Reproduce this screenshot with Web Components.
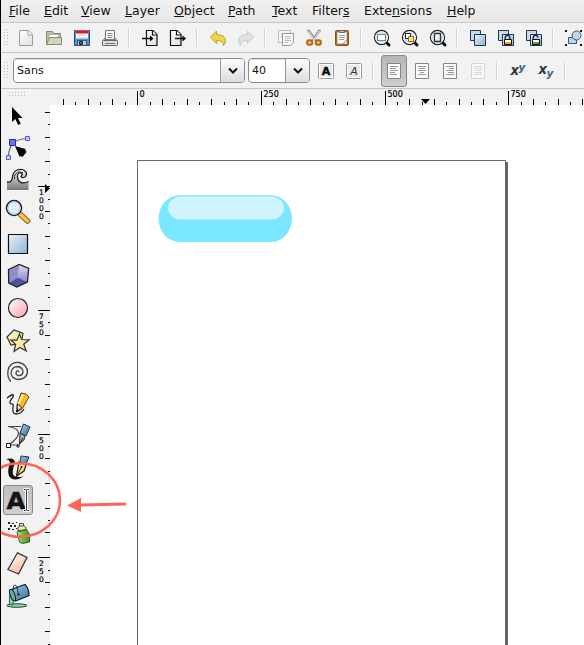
<!DOCTYPE html>
<html lang="en">
<head>
<meta charset="utf-8">
<title>Vector editor</title>
<style>
html,body{margin:0;width:584px;height:645px;overflow:hidden;background:#f2f2f2;font-family:"DejaVu Sans",sans-serif;color:#111}
</style>
</head>
<body>
<vector-app></vector-app>
<script>
const page = (x, y, w, h) => `<path d="M${x} ${y}h${w-4}l4 4v${h-4}h-${w}z" fill="url(#pg)"/>`;
const lens = inner => `<path d="M18.500 18.500l2.500 2.500" stroke="#111" stroke-width="3" stroke-linecap="round"/><circle cx="13.5" cy="13.5" r="7" fill="#d0e2f2" stroke="#222" stroke-width="1.3"/><circle cx="13.5" cy="13.5" r="5.9" fill="none" stroke="#eef6fc"/>${inner}`;
const dup = extra => `<g stroke="#20354f"><path d="M6.5 6.5h10v10h-10z" fill="#c7d9ea"/><path d="M10.500 10.500h11v11h-11z" fill="url(#bl)"/></g>${extra}`;
const lock = (c, open) => `<path d="M13.200 16v-2.500q0-2.200 2.300-2.200t2.300 2.200${open ? '' : 'v2.500'}" fill="none" stroke="#222" stroke-width="1.300"/><path d="M12.500 15.500h7v5h-7z" fill="#fff" stroke="#111"/><path d="M13 18h6v2h-6z" fill="${c}"/>`;
const boxed = c => `<rect x="6.500" y="6.500" width="15" height="15" rx="1" fill="#fff" stroke="#999"/><path d="M8 8h12v12h-12z" fill="#e9e9e9"/>${c}`;
const lines = (rows, faded) => `<path d="M7.500 6.500h13v15h-13z" fill="#fafafa" stroke="${faded ? '#d4d4d4' : '#858585'}"/><path d="${rows.map((r,i)=>`M${r[0]} ${9.500+i*2}h${r[1]}`).join('')}" stroke="${faded ? '#d4d4d4' : '#999'}"/>`;
const DEFS = `<defs><linearGradient id="pg" x2="1" y2="1"><stop stop-color="#fff"/><stop offset="1" stop-color="#ddd"/></linearGradient><linearGradient id="bl" x2="1" y2="1"><stop stop-color="#e9f3fb"/><stop offset="1" stop-color="#8fb2d0"/></linearGradient><linearGradient id="pk" x2="1" y2="1"><stop stop-color="#fff"/><stop offset="1" stop-color="#ff9eaa"/></linearGradient><linearGradient id="er" x2=".6" y2="1"><stop stop-color="#fff"/><stop offset="1" stop-color="#ffb9a4"/></linearGradient><linearGradient id="yl" x2="1" y2="1"><stop stop-color="#fffbe0"/><stop offset="1" stop-color="#fce068"/></linearGradient><linearGradient id="gr" x2="0" y2="1"><stop stop-color="#f3f3f3"/><stop offset="1" stop-color="#777"/></linearGradient><linearGradient id="bu" x2="1" y2="1"><stop stop-color="#a9cee4"/><stop offset="1" stop-color="#336e99"/></linearGradient><linearGradient id="vi" x2="0" y2="1"><stop stop-color="#dcdcf8"/><stop offset="1" stop-color="#8787c6"/></linearGradient><linearGradient id="gn" x2="1" y2="0"><stop stop-color="#c6f09d"/><stop offset=".4" stop-color="#6fc43f"/><stop offset="1" stop-color="#43962c"/></linearGradient></defs>`;
const ICONS = {
 new: `<g stroke="#9a9a9a">${page(7.5,6.5,13,15)}<path d="M16 6.500v4.500h4.500" fill="#fff"/></g>`,
 open: `<g stroke="#838b70"><path d="M6.500 20.500v-13h6l1.500 2h6.500v5" fill="#b9c3a2"/><path d="M9 10.500h9.500v4h-9.500z" fill="#fff" stroke="#aaa"/><path d="M6.500 20.500l3-7h12v7z" fill="#d0d8bb"/></g>`,
 save: `<path d="M6.500 6.500h15v15h-15z" fill="#5c8fc9" stroke="#204a87"/><path d="M8 6.500h12v8h-12z" fill="#fff"/><path d="M8 6.500h12v3h-12z" fill="#e3121b"/><path d="M9.500 11.500h9M9.500 13.500h9" stroke="#ddd"/><path d="M9.500 16.500h9v5h-9z" fill="#c5cbd2" stroke="#35557d"/><path d="M11.500 17.500h3v3h-3z" fill="#3d6ba2" stroke="#223"/>`,
 print: `<path d="M9.500 16.500v-10h9v10" fill="#fff" stroke="#777"/><path d="M11.500 9.500h5M11.500 11.500h5M11.500 13.500h5" stroke="#888"/><path d="M6.500 21.500v-4l2.500-3.500M21.500 17.500l-2.500-3.500" fill="none" stroke="#666"/><rect x="6.500" y="16.500" width="15" height="5" rx="1" fill="#ddd" stroke="#666"/><path d="M9 15.500h10M9 19.500h10" stroke="#777"/>`,
 import: `<g stroke="#111" stroke-width="1.200">${page(10.5,6.500,10.500,15)}<path d="M16.500 6.500v4.500h4.500" fill="#fff"/></g><path d="M6 14.500h9" stroke="#111" stroke-width="1.500"/><path d="M14 11.500l3.500 3-3.500 3z"/>`,
 export: `<g stroke="#111" stroke-width="1.200">${page(6.5,6.500,10.500,15)}<path d="M12.500 6.500v4.500h4.500" fill="#fff"/></g><path d="M11 14.500h9" stroke="#111" stroke-width="1.500"/><path d="M18.500 11.500l3.500 3-3.500 3z"/>`,
 undo: `<path d="M6.500 13l6-6v3.500q9 0 9 6.500 0 2.500-2 4.500-.5-5.500-7-5v3z" fill="#edd547" stroke="#c4a31e"/>`,
 redo: `<path d="M21.500 13l-6-6v3.500q-9 0-9 6.500 0 2.500 2 4.500.5-5.500 7-5v3z" fill="#dfe1df" stroke="#c9ccc9"/>`,
 copy: `<path d="M6.500 6.500h12v12h-12z" fill="#f5f5f5" stroke="#bbb"/><path d="M9 9.500h4M9 12.500h2" stroke="#ccc"/><path d="M10.500 9.500h11v9l-3 3h-8z" fill="#fafafa" stroke="#999"/><path d="M13 12.500h6M13 14.500h6M13 16.500h6M13 18.500h3" stroke="#bbb"/>`,
 cut: `<path d="M8 6l7 10M20 6l-7 10" stroke="#888" stroke-width="2.600"/><path d="M8.300 7l6 9M19.700 7l-6 9" stroke="#e4e4e4" stroke-width="1.200"/><g fill="#f5c68b" stroke="#b76512" stroke-width="2"><rect x="7.200" y="16.200" width="5" height="4.600" rx="1.700"/><rect x="15.800" y="16.200" width="5" height="4.600" rx="1.700"/></g>`,
 paste: `<rect x="7.500" y="6.500" width="13" height="15" rx="1" fill="#b56c1b" stroke="#8d5312"/><path d="M9.500 8.500h9v11h-9z" fill="#fff" stroke="#ccc"/><path d="M11.500 6.500h5v2h-5z" fill="#bbb" stroke="#666"/><path d="M11 11.500h6M11 13.500h6M11 15.500h5" stroke="#999"/><path d="M15 19.500l3.500-3.500" stroke="#777"/>`,
 zsel: lens(`<path d="M9.500 10.500h8v6h-8z" fill="#fff" stroke="#111" stroke-dasharray="1 1"/>`),
 zdraw: lens(`<path d="M9.500 9.500h5v5h-5z" fill="#fff" stroke="#222"/><path d="M12.500 12.500h5v5h-5z" fill="#ffe292" stroke="#9a6c10"/>`),
 zpage: lens(`<path d="M10.500 9.500h6v8h-6z" fill="url(#pg)" stroke="#333" stroke-width="1.300"/>`),
 dup: dup(''), clone: dup(lock('#f3a51e', false)), unlink: dup(lock('#68a51d', true)),
 group: `<g fill="#c0d5e8" stroke="#3b5877"><path d="M8.500 13.500h8v6h-8z"/><circle cx="16.500" cy="11.500" r="4.500"/></g><path d="M5 6h2v2h-2zM20 6h2v2h-2zM5 20h2v2h-2zM20 20h2v2h-2z" fill="#111"/>`,
 bold: boxed(`<text x="14" y="18" text-anchor="middle" font-size="11" font-weight="bold" stroke="#111" stroke-width=".4">A</text>`),
 italic: boxed(`<text x="14" y="18" text-anchor="middle" font-size="11" font-style="italic" fill="#333">A</text>`),
 left: lines([[10,8],[10,6],[10,8],[10,5],[10,7]]), center: lines([[10,8],[11,6],[10,8],[12,4],[10,8]]), right: lines([[10,8],[13,5],[10,8],[12,6],[10,8]]), justify: lines([[10,8],[10,8],[10,8],[10,8],[10,8]], 1),
 sup: `<text x="6.500" y="18" font-size="14" font-style="italic" font-weight="bold" fill="#333" textLength="8.500" lengthAdjust="spacingAndGlyphs">x</text><text x="14.500" y="14" font-size="10.500" font-style="italic" font-weight="bold" fill="#3c6587">y</text>`,
 sub: `<text x="6.500" y="17" font-size="14" font-style="italic" font-weight="bold" fill="#333" textLength="8.500" lengthAdjust="spacingAndGlyphs">x</text><text x="14.500" y="19.500" font-size="10.500" font-style="italic" font-weight="bold" fill="#3c6587">y</text>`,
 select: `<path d="M10 7v15l3.300-3 2.900 6 2.600-1.300-2.900-5.700h4.600z" fill="#000"/>`,
 node: `<path d="M6.500 25Q6.500 7 25 6.500" fill="none" stroke="#666" stroke-width="1.200"/><path d="M4.500 23.500h4v4h-4zM23.500 4.500h4v4h-4z" fill="#c6c6ff" stroke="#5b5be5"/><path d="M7.500 7.500h6v6h-6z" fill="#7272df" stroke="#2929cc"/><path d="M13 14l4.500 10.500q1.500-.5 3 .5l4-5q-1.500-1.500-1-3z" fill="#000"/>`,
 tweak: `<path d="M5 18q5 1 5.500-5 .5-5 4.500-7 5-1.500 8 1 3 3 0 6-3 1.500-4-.5 2-2 .5-3.500-3-1-4 2-.5 5 3 7.500 4 1 8-1v8.500H5z" fill="url(#gr)"/><path d="M5 18q5 1 5.500-5 .5-5 4.500-7 5-1.500 8 1 3 3 0 6-3 1.500-4-.5 2-2 .5-3.500-3-1-4 2-.5 5 3 7.500 4 1 8-1" fill="none" stroke="#222" stroke-width="1.300"/><path d="M12.500 15q-.5-5 3.500-7 3-.5 5 1" fill="none" stroke="#333"/>`,
 zoom: `<path d="M19 19l6.500 6" stroke="#925d14" stroke-width="5.500" stroke-linecap="round"/><path d="M18.500 18.500l7 6.500" stroke="#ffc04e" stroke-width="3.500" stroke-linecap="round"/><circle cx="12" cy="12" r="7.500" fill="#e4f2ff" stroke="#222" stroke-width="1.600"/><circle cx="12" cy="12" r="6.100" fill="none" stroke="#afcbe5" stroke-width="1.200"/>`,
 rect: `<path d="M6.500 6.500h19v19h-19z" fill="url(#bl)" stroke="#111" stroke-width="1.200"/>`,
 box: `<path d="M6.500 9.500L17.300 4.500 16 17.500 6.700 23z" fill="#8f8fce"/><path d="M17.300 4.500l9.400 4-1.300 13.500-9.400-4.500z" fill="url(#vi)"/><path d="M16 17.500l9.400 4.500-10.500 5-8.200-4z" fill="#50509f"/><path d="M6.500 9.500L17.300 4.500l9.400 4-1.300 13.500-10.500 5-8.200-4z" fill="none" stroke="#222" stroke-width="1.300"/>`,
 ellipse: `<circle cx="16" cy="16" r="9.500" fill="url(#pk)" stroke="#222" stroke-width="1.200"/>`,
 star: `<path d="M5 13l7-7 9 3.500-2 10-10 1.500z" fill="url(#yl)" stroke="#333" stroke-width="1.200"/><path d="M17.500 10l2.200 5.500 7.500.3-5.500 4.500 2.500 6.700-6.200-3.500-6 4 1.700-7-4.700-4.300h6z" fill="url(#yl)" stroke="#333" stroke-width="1.200"/>`,
 spiral: `<path d="M17 16q-1-2-2.500-.5Q13 18 16 19.500q4 .5 5-3 0-5-5-6-6 0-7 6 0 6 7 7 8 0 9.500-7 0-8-8.500-10-9-1-11 8Q5 22 9 25.500" fill="none" stroke="#444" stroke-width="1.300"/>`,
 pencil: `<path d="M5 10q8-6 6-1-5 6-2 7 3-1 2 3-1 7 3 7 5 0 8-5" fill="none" stroke="#222" stroke-width="1.300"/><path d="M19 5q6 0 8 4l-7 12-5 3v-7z" fill="#f9b92c" stroke="#6b4215"/><path d="M21 6.500l-5 10" stroke="#fff49a" stroke-width="2"/><path d="M15.500 16l4 3-4.500 5z" fill="#fff6df" stroke="#222"/><path d="M15 20l1.500 2-2.500 3z"/>`,
 pen: `<path d="M6.500 6.500q10 2 10 7 0 4-9.500 11.500h9" fill="none" stroke="#444" stroke-width="1.200"/><path d="M6 6.500h13" stroke="#444"/><path d="M4.500 23.500h4v4h-4zM15 25h2v2h-2z" fill="#fff" stroke="#111"/><path d="M21.500 4l6.500 3-4 9-6-3z" fill="url(#bu)" stroke="#234"/><path d="M18 13l5 3-1 4-4.500 4z" fill="#aaa" stroke="#333"/><path d="M17 25l4-7" stroke="#222"/>`,
 calligraphy: `<path d="M4 7q9-2 9 4-4 9-1 13 6 2 10 0-10 7-15 0Q5 19 8 11q0-3-4-4z" fill="#111"/><path d="M19 4l8 1-3 7-6-2z" fill="url(#bu)" stroke="#234"/><path d="M17 10l7 3-2 6-7.500 5z" fill="#ffd98c" stroke="#33250a" stroke-width="1.300"/><path d="M15 23l4.500-7.500" stroke="#222"/><circle cx="19.500" cy="15" r="1"/>`,
 text: `<text x="4.500" y="24.500" font-size="23.500" font-weight="bold" fill="#151515" stroke="#151515" stroke-width=".5" textLength="19" lengthAdjust="spacingAndGlyphs">A</text><path d="M21.500 5.500h2q1 0 1 1v19q0 1-1 1h-2M27.500 5.500h-2q-1 0-1 1v19q0 1 1 1h2" fill="none" stroke="#fff" stroke-width="3"/><path d="M22 5.500h1.500q1 0 1 1v19q0 1-1 1h-1.500M27 5.500h-1.500q-1 0-1 1v19q0 1 1 1h1.500" fill="none" stroke="#333" stroke-width="1"/>`,
 spray: `<path d="M6 6h2v2h-2zM10 7h2v1h-2zM8 9h2v2h-2zM6 12h2v2h-2zM12 9h2v2h-2zM10 13h2v1h-2zM14 6h1v1h-1zM14 12h1v1h-1z" fill="#222"/><path d="M15 16l9.500-2.500 3 5v7.500l-7 1.500-3-1.500z" fill="url(#gn)" stroke="#30602b"/><path d="M16 15v-3l2-3h3l2.500 2 .8 2.500z" fill="#f3e89b" stroke="#444"/><path d="M17.500 7.500h4v2.500h-4z" fill="#eee" stroke="#444"/>`,
 eraser: `<path d="M15.500 4.800l9.500 4.700-8.500 16.500-10.500-4.500z" fill="url(#er)" stroke="#333" stroke-width="1.300"/>`,
 bucket: `<ellipse cx="14.800" cy="25.500" rx="10" ry="1.800" fill="#8dcaaa" stroke="#224b3a"/><path d="M8 12q-1 8-.5 12l3 1q0-2 1.500-4z" fill="#8ad2a9" stroke="#365"/><path d="M8 10l15-5.500q4 4 4 11l-13.500 5.500z" fill="url(#bu)" stroke="#123" stroke-width="1.200"/><ellipse cx="10.500" cy="15" rx="2.300" ry="6" transform="rotate(-20 10.500 15)" fill="#62aa91" stroke="#123"/><path d="M11.500 10V6q1.500-2 3 0l2 8" fill="none" stroke="#333"/><circle cx="16.500" cy="14.500" r="1.300" fill="#333"/>`
};

function define(name, render) {
  customElements.define(name, class extends HTMLElement {
    constructor() { super(); this.attachShadow({mode: 'open'}); }
    connectedCallback() { this.shadowRoot.innerHTML = render(this); }
  });
}

define('tool-icon', el => {
  const s = el.getAttribute('size') || 28;
  return `<style>:host{display:block;flex:none;width:${s}px;height:${s}px}svg{display:block;font-family:"DejaVu Sans",sans-serif}</style><svg width="${s}" height="${s}" viewBox="0 0 ${s} ${s}" fill="none" stroke="none"><g fill="#000">${DEFS}${ICONS[el.getAttribute('name')]}</g></svg>`;
});
define('tool-separator', () => `<style>:host{display:block;flex:none;width:12px;height:18px;background:linear-gradient(90deg,transparent 4px,#d5d5d5 4px 5px,#fff 5px 6px,transparent 6px)}</style>`);
define('drag-handle', el => {
  const h = el.hasAttribute('wide');
  return `<style>:host{display:block;flex:none;width:${h?18:6}px;height:${h?6:18}px;background:radial-gradient(circle at .5px .5px,#bbb .6px,transparent .8px) 0 0/3px 3px}</style>`;
});

const MENU = [['F','','ile',35],['E','','dit',37],['V','','iew',44],['L','','ayer',49],['O','','bject',54],['P','','ath',44],['T','','ext',40],['s','Filter','',52],['n','Exte','sions',83],['H','','elp',40]];
define('menu-bar', () => `<style>:host{display:flex;box-sizing:border-box;height:23px;padding-left:8px;border-bottom:1px solid #c6c6c6;background:linear-gradient(#f0f0f0,#e8e8e8);font-size:12.500px;line-height:21px;white-space:nowrap}span{flex:none}u{text-decoration:underline;text-decoration-thickness:1px;text-underline-offset:1px;text-decoration-skip-ink:none}</style>${MENU.map(m=>`<span style="width:${m[3]}px">${m[1]}<u>${m[0]}</u>${m[2]}</span>`).join('')}`);

const icons = list => list.split(' ').map(n => n === '|' ? '<tool-separator></tool-separator>' : `<tool-icon name="${n}"></tool-icon>`).join('');
define('command-bar', () => `<style>:host{display:flex;align-items:center;box-sizing:border-box;height:30px;border-bottom:1px solid #c6c6c6;overflow:hidden;padding-left:3px}drag-handle{margin-right:2px}</style><drag-handle></drag-handle>${icons('new open save print | import export | undo redo | copy cut paste | zsel zdraw zpage | dup clone unlink | group')}`);

define('combo-box', el => `<style>:host{display:flex;flex:none;box-sizing:border-box;height:25px;border:1px solid #8b8b8b;border-radius:4px;overflow:hidden;background:#fff;font-size:11px;line-height:23px;letter-spacing:.1px}div{flex:1;padding-left:3px;box-shadow:inset 0 1px #ddd}i{width:23px;border-left:1px solid #999;background:linear-gradient(#fdfdfd,#ddd);display:grid;place-items:center}svg{display:block}</style><div><slot></slot></div><i><svg width="12" height="8"><path d="M2 1.500l4 4 4-4" fill="none" stroke="#111" stroke-width="2"/></svg></i>`);

define('text-options', () => `<style>:host{display:flex;align-items:center;box-sizing:border-box;height:36px;border-bottom:1px solid #c6c6c6;padding-left:3px}drag-handle{margin-right:3px}.font{width:232px;margin-right:3px}.size{width:62px;margin-right:2px}.on{box-sizing:border-box;width:28px;height:32px;display:grid;place-items:center;margin:0}.on::before{content:"";grid-area:1/1;box-sizing:border-box;width:26px;height:32px;border:1px solid #8a8a8a;border-radius:3px;background:linear-gradient(#b5b5b5,#cfcfcf)}.on tool-icon{grid-area:1/1}</style><drag-handle></drag-handle><combo-box class="font">Sans</combo-box><combo-box class="size">40</combo-box>${icons('bold italic |')}<span class="on">${icons('left')}</span>${icons('center right justify | sup sub |')}`);

const TOOLS = 'select node tweak zoom rect box ellipse star spiral pencil pen calligraphy text spray eraser bucket'.split(' ');
define('tool-box', () => `<style>:host{display:flex;flex-direction:column;align-items:center;width:34px;padding-top:3px}drag-handle{margin-bottom:2px}span{box-sizing:border-box;width:32px;height:32px;display:grid;place-items:center;flex:none}tool-icon{grid-area:1/1}.on::before{content:"";grid-area:1/1;box-sizing:border-box;width:30px;height:30px;border:1px solid #888;border-radius:3px;background:linear-gradient(#bdbdbd,#d0d0d0)}</style><drag-handle wide></drag-handle>${TOOLS.map(t=>`<span class="${t==='text'?'on':''}"><tool-icon size="32" name="${t}"></tool-icon></span>`).join('')}`);

// Both rulers share one pitch: ten divisions per 250 units.
const STEP = 12.365;
define('ruler-x', () => {
  let d = '', t = '';
  for (let i = -6; i <= 36; i++) {
    const x = Math.floor(87.7 + i*STEP) + .5;
    const major = i % 10 === 0;
    d += `M${x} 16V${major ? 2 : i % 2 ? 13 : 10}`;
    if (major) t += `<text x="${x+2}" y="8">${i*25}</text>`;
  }
  return `<style>:host{display:block;height:16px}svg{display:block;font:8px "DejaVu Sans",sans-serif}</style><svg width="534" height="16"><path d="${d}" stroke="#000"/><g stroke="#000" stroke-width=".2">${t}</g><path d="M371 10h9l-4.500 5z"/></svg>`;
});
define('ruler-y', () => {
  let d = '', t = '';
  const names = {0:'1000',10:'750',20:'500',30:'250'};
  for (let i = -6; i <= 37; i++) {
    const y = Math.floor(97.700 + i*STEP) + .5;
    d += `M15 ${y}H${i % 10 === 0 ? 3 : i % 2 ? 13 : 10}`;
    if (names[i]) t += [...names[i]].map((c,k)=>`<text x="4" y="${y+8.500+k*8}">${c}</text>`).join('');
  }
  return `<style>:host{display:block;width:15px}svg{display:block;font:7.500px "DejaVu Sans",sans-serif}</style><svg width="15" height="556"><path d="${d}" stroke="#000"/><g stroke="#000" stroke-width=".2">${t}</g><path d="M10 95v9l5-4.500z"/></svg>`;
});
define('drawing-canvas', () => `<style>:host{display:block;background:#fff;overflow:hidden}svg{display:block}</style><svg width="534" height="540"><path d="M455 57h3v483h-3z" fill="#666"/><path d="M87.500 545V55.500h368V545" fill="#fff" stroke="#666"/><rect x="108.500" y="90.300" width="133.500" height="46.700" rx="21" ry="23.300" fill="#7ae6ff"/><rect x="118" y="91.500" width="116" height="23" rx="13" ry="11.500" fill="#d0f4ff"/></svg>`);
define('callout-mark', () => `<style>:host{position:absolute;left:0;top:455px;pointer-events:none}svg{display:block}</style><svg width="140" height="90"><g stroke="#ff6557" fill="none"><ellipse cx="20" cy="45" rx="40" ry="36.800" stroke-width="2.500"/><path d="M80 50l46-1" stroke-width="3"/></g><path d="M67 50.500l14-7.500v14z" fill="#ff6557"/></svg>`);

define('vector-app', () => `<style>:host{display:flex;flex-direction:column;position:relative;box-sizing:border-box;width:584px;height:645px;border-left:1px solid #000;background:#f2f2f2;overflow:hidden}main{display:grid;grid-template-columns:34px 15px 534px;grid-template-rows:16px 540px}tool-box{grid-area:1/1/3/2}ruler-y{grid-area:1/2/3/3}ruler-x{grid-area:1/3}drawing-canvas{grid-area:2/3}callout-mark{margin-left:-1px}</style><menu-bar></menu-bar><command-bar></command-bar><text-options></text-options><main><tool-box></tool-box><ruler-y></ruler-y><ruler-x></ruler-x><drawing-canvas></drawing-canvas></main><callout-mark></callout-mark>`);
</script>
</body>
</html>
